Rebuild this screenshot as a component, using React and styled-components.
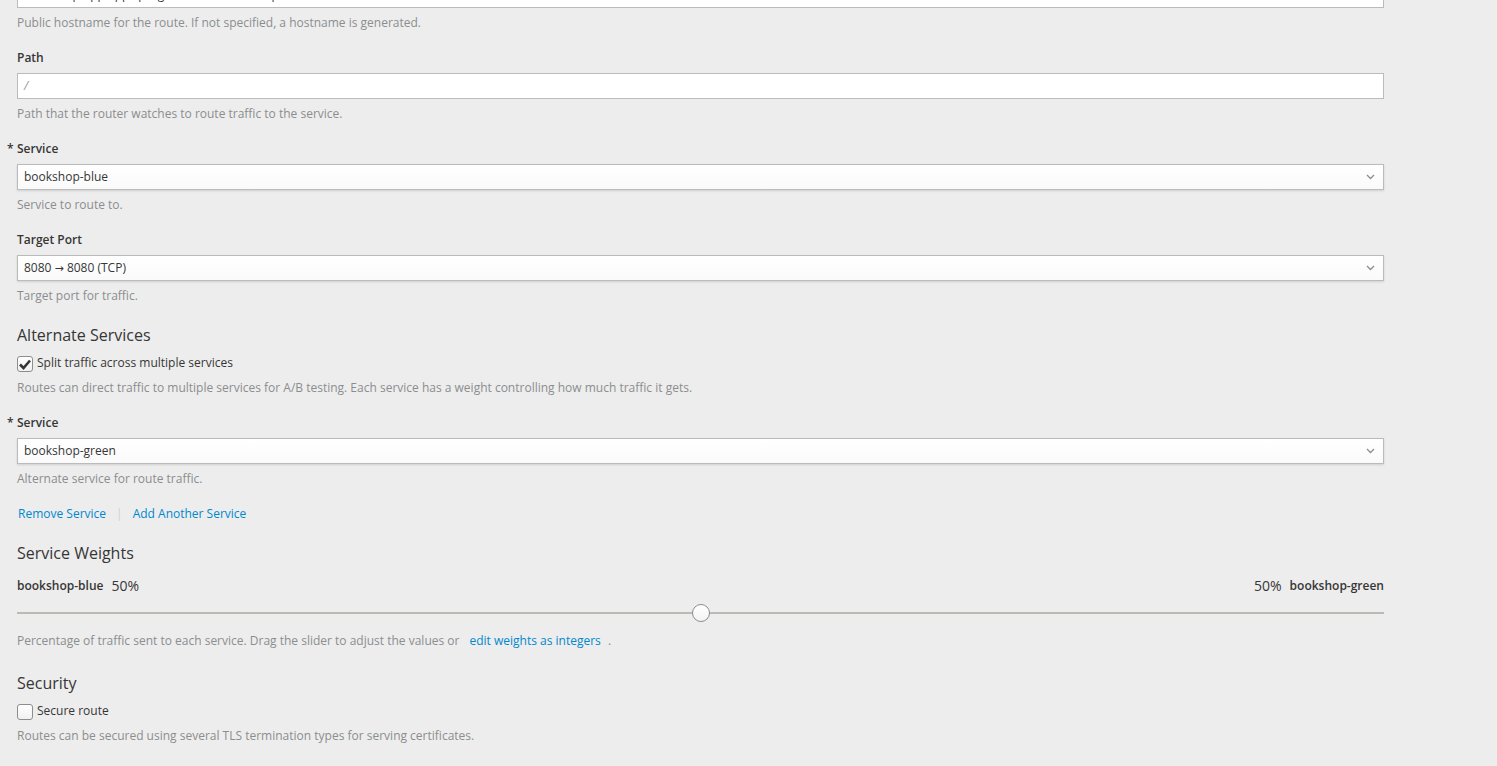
import React from "react";
import styled, { createGlobalStyle } from "styled-components";

const Global = createGlobalStyle`
  html, body { margin: 0; padding: 0; }
  body {
    background: #ededed;
    font-family: "Open Sans", "Liberation Sans", sans-serif;
    font-size: 12px;
    line-height: 20px;
    color: #363636;
    overflow: hidden;
  }
`;

const Page = styled.div`
  width: 1497px;
  height: 766px;
  overflow: hidden;
`;

const Form = styled.div`
  width: 1367px;
  margin-left: 17px;
  margin-top: -18px;
  display: flex;
  flex-direction: column;
`;

const Label = styled.label`
  position: relative;
  display: block;
  font-weight: 600;
  font-size: 12px;
  line-height: 20px;
  color: #363636;
  margin-top: 15px;
  margin-bottom: 5px;
`;

const Required = styled.span`
  position: absolute;
  left: -10px;
  top: 0;
  font-weight: 600;
`;

const Input = styled.div`
  box-sizing: border-box;
  height: 26px;
  padding: 2px 6px;
  border: 1px solid #bbb;
  background: #fff;
  font-size: 12px;
  line-height: 20px;
  color: ${(p) => (p.$placeholder ? "#999" : "#363636")};
  font-style: ${(p) => (p.$placeholder ? "italic" : "normal")};
  white-space: nowrap;
  overflow: hidden;
`;

const Select = styled.div`
  box-sizing: border-box;
  height: 26px;
  padding: 2px 8px 2px 6px;
  border: 1px solid #bbb;
  background: linear-gradient(#ffffff, #fafafa);
  box-shadow: 0 1px 2px rgba(3, 3, 3, 0.12);
  display: flex;
  align-items: center;
  justify-content: space-between;
  font-size: 12px;
  line-height: 20px;
  color: #363636;
`;

const Arrow = styled.span`
  font-family: "DejaVu Sans", sans-serif;
  font-size: 11px;
`;

const Help = styled.div`
  margin-top: ${(p) => p.$mt ?? 5}px;
  font-size: 12px;
  line-height: 20px;
  color: #8b8d8f;
`;

const Heading = styled.h3`
  margin: ${(p) => p.$mt}px 0 0;
  font-size: 16px;
  font-weight: 400;
  line-height: 22px;
  color: #363636;
`;

const CheckRow = styled.div`
  display: flex;
  align-items: center;
  gap: 4px;
  margin-top: ${(p) => p.$mt}px;
  height: 20px;
  font-size: 12px;
  color: #363636;
`;

const Box = styled.span`
  box-sizing: border-box;
  width: 16px;
  height: 16px;
  margin-top: 2px;
  border: 1px solid #8b8d8f;
  border-radius: 3px;
  background: linear-gradient(#ffffff, #f1f1f1);
  display: inline-flex;
  align-items: center;
  justify-content: center;
`;

const LinkRow = styled.div`
  display: flex;
  align-items: center;
  gap: 10px;
  margin-top: 15px;
  padding-left: 1px;
  line-height: 20px;
`;

const Link = styled.a`
  color: #0088ce;
  text-decoration: none;
  cursor: pointer;
`;

const Sep = styled.span`
  color: #d1d1d1;
`;

const WeightRow = styled.div`
  display: flex;
  justify-content: space-between;
  align-items: center;
  margin-top: 12px;
  height: 20px;
`;

const WeightSide = styled.div`
  display: flex;
  align-items: center;
  gap: 8px;
`;

const WeightName = styled.span`
  font-weight: 600;
  font-size: 12px;
`;

const WeightValue = styled.span`
  font-size: 14px;
  color: #363636;
`;

const Slider = styled.div`
  position: relative;
  height: 20px;
  margin-top: 7px;
  display: flex;
  align-items: center;
`;

const Track = styled.div`
  width: 100%;
  height: 2px;
  background: #bbbbb5;
`;

const Thumb = styled.span`
  position: absolute;
  top: 1px;
  box-sizing: border-box;
  width: 18px;
  height: 18px;
  margin-left: -9px;
  border-radius: 50%;
  border: 1px solid #8b8d8f;
  background: linear-gradient(#ffffff, #f4f4f4);
`;

const InlineLink = styled(Link)`
  padding: 0 4px 0 10px;
`;

const Chevron = () => (
  <svg width="9" height="6" viewBox="0 0 9 6">
    <polyline points="1,1 4.5,4.5 8,1" fill="none" stroke="#8b8d8f" strokeWidth="1.3" />
  </svg>
);

const Check = () => (
  <svg width="12" height="11" viewBox="0 0 12 11">
    <path d="M1 5.5 L4.5 9 L11 1.5" fill="none" stroke="#363636" strokeWidth="2.6" strokeLinejoin="miter" />
  </svg>
);

export default function App() {
  const weight = 50;
  return (
    <Page>
      <Global />
      <Form>
        <Input>bookshop-app.apps.progdemo.cluster.example.com</Input>
        <Help>Public hostname for the route. If not specified, a hostname is generated.</Help>

        <Label>Path</Label>
        <Input $placeholder>/</Input>
        <Help>Path that the router watches to route traffic to the service.</Help>

        <Label>
          <Required>*</Required>Service
        </Label>
        <Select>
          <span>bookshop-blue</span>
          <Chevron />
        </Select>
        <Help>Service to route to.</Help>

        <Label>Target Port</Label>
        <Select>
          <span>
            8080 <Arrow>→</Arrow> 8080 (TCP)
          </span>
          <Chevron />
        </Select>
        <Help>Target port for traffic.</Help>

        <Heading $mt={18}>Alternate Services</Heading>
        <CheckRow $mt={7}>
          <Box>
            <Check />
          </Box>
          <span>Split traffic across multiple services</span>
        </CheckRow>
        <Help>
          Routes can direct traffic to multiple services for A/B testing. Each service has a weight controlling how
          much traffic it gets.
        </Help>

        <Label>
          <Required>*</Required>Service
        </Label>
        <Select>
          <span>bookshop-green</span>
          <Chevron />
        </Select>
        <Help>Alternate service for route traffic.</Help>

        <LinkRow>
          <Link>Remove Service</Link>
          <Sep>|</Sep>
          <Link>Add Another Service</Link>
        </LinkRow>

        <Heading $mt={18}>Service Weights</Heading>
        <WeightRow>
          <WeightSide>
            <WeightName>bookshop-blue</WeightName>
            <WeightValue>{weight}%</WeightValue>
          </WeightSide>
          <WeightSide>
            <WeightValue>{100 - weight}%</WeightValue>
            <WeightName>bookshop-green</WeightName>
          </WeightSide>
        </WeightRow>
        <Slider>
          <Track />
          <Thumb style={{ left: `${weight}%` }} />
        </Slider>
        <Help $mt={8}>
          Percentage of traffic sent to each service. Drag the slider to adjust the values or
          <InlineLink>edit weights as integers</InlineLink> .
        </Help>

        <Heading $mt={21}>Security</Heading>
        <CheckRow $mt={7}>
          <Box />
          <span>Secure route</span>
        </CheckRow>
        <Help>Routes can be secured using several TLS termination types for serving certificates.</Help>
      </Form>
    </Page>
  );
}
